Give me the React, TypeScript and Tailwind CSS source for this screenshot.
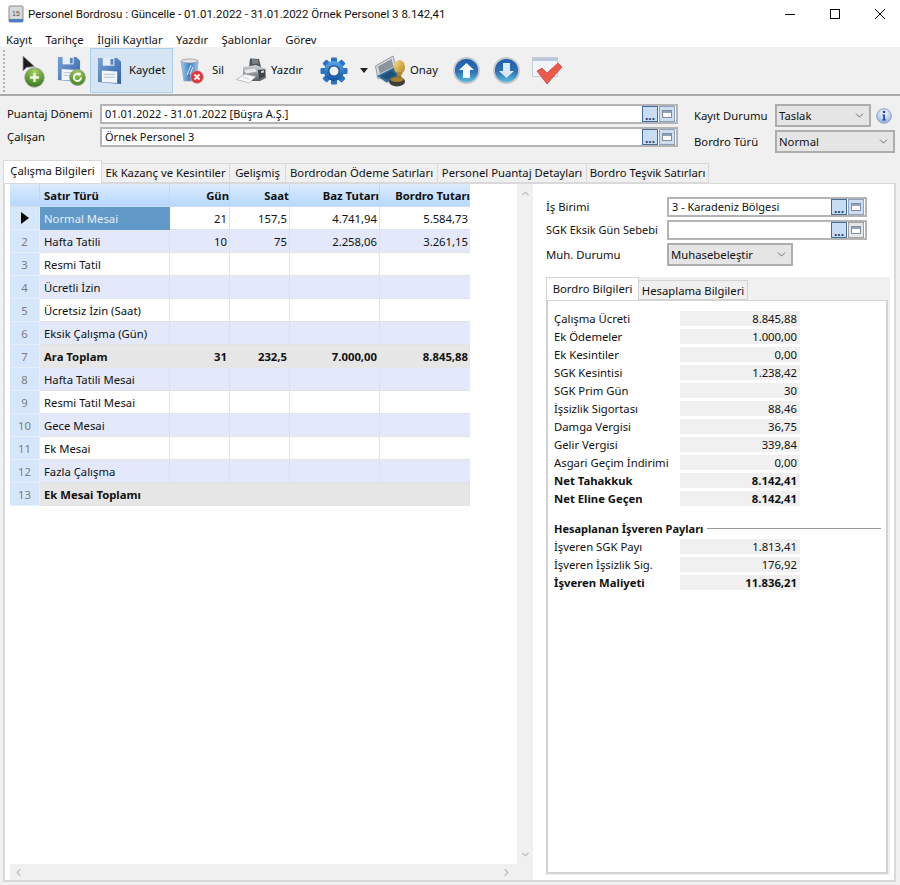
import type { ReactNode } from "react";
import { ChevronDown, ChevronLeft, ChevronRight, ChevronUp } from "lucide-react";

function Floppy({ w = 26, id }: { w?: number; id: string }) {
  return (
    <svg width={w} height={w * 1.12} viewBox="0 0 26 29">
      <defs>
        <linearGradient id={id} x1="0" x2="1" y1="0" y2="1">
          <stop offset="0" stopColor="#7aa3d6" />
          <stop offset="1" stopColor="#2f5fa5" />
        </linearGradient>
      </defs>
      <path d="M1 1h20l4 4v23L1 26z" fill={`url(#${id})`} />
      <path d="M6 1h12v8H6z" fill="#e8eef7" />
      <path d="M14 2h3v6h-3z" fill="#5c86bf" />
      <path d="M5 14l16 1v12L5 26z" fill="#f2f5f9" />
      <path d="M7 18h12M7 21h12" stroke="#b3c2d6" strokeWidth="1" />
    </svg>
  );
}

function GreenBadge({ children }: { children: ReactNode }) {
  return (
    <svg width="17" height="17" viewBox="0 0 17 17" className="absolute right-0 bottom-0">
      <defs>
        <radialGradient id="gb" cx="0.5" cy="0.25" r="0.85">
          <stop offset="0" stopColor="#a9d05c" />
          <stop offset="1" stopColor="#2f7a18" />
        </radialGradient>
      </defs>
      <circle cx="8.5" cy="8.5" r="8" fill="url(#gb)" stroke="#a5a5a5" strokeWidth="0.8" />
      {children}
    </svg>
  );
}

function ArrowAdd() {
  return (
    <div className="relative w-[24px] h-[32px] shrink-0">
      <svg width="14" height="18" viewBox="0 0 14 18" className="absolute left-0 top-0">
        <path d="M1 1v15l3.5-3.5 8-1z" fill="#1c1c1c" stroke="#a0a0a0" strokeWidth="0.8" />
      </svg>
      <div className="absolute left-[2px] bottom-[-1px] w-[21px] h-[21px]">
        <svg width="21" height="21" viewBox="0 0 21 21">
          <defs>
            <radialGradient id="add" cx="0.5" cy="0.2" r="0.9">
              <stop offset="0" stopColor="#acd165" />
              <stop offset="0.7" stopColor="#4a8c25" />
              <stop offset="1" stopColor="#2a6a16" />
            </radialGradient>
          </defs>
          <circle cx="10.5" cy="10.5" r="9.7" fill="url(#add)" stroke="#9a9a9a" strokeWidth="1" />
          <path d="M10.5 6v9M6 10.5h9" stroke="#f4f8ec" strokeWidth="2.4" />
        </svg>
      </div>
    </div>
  );
}

function SaveRefresh() {
  return (
    <div className="relative w-[29px] h-[30px] shrink-0">
      <Floppy w={24} id="fl1" />
      <GreenBadge>
        <path d="M12 8.5a3.6 3.6 0 1 1-1.5-3" fill="none" stroke="#fff" strokeWidth="1.8" />
        <path d="M8.5 3.5l3.5 0.5-1 3.5z" fill="#fff" />
      </GreenBadge>
    </div>
  );
}

function TrashIcon() {
  return (
    <svg width="24" height="26" viewBox="0 0 24 26" className="shrink-0">
      <defs>
        <linearGradient id="tr" x1="0" x2="1" y1="0" y2="0">
          <stop offset="0" stopColor="#a7cdee" />
          <stop offset="0.5" stopColor="#3c7fc8" />
          <stop offset="1" stopColor="#9dc2e4" />
        </linearGradient>
      </defs>
      <path d="M1 3h17l-2 20H4z" fill="url(#tr)" stroke="#8aa0b5" strokeWidth="0.7" />
      <ellipse cx="9.5" cy="3" rx="8.5" ry="2" fill="#dfe5ea" stroke="#8b8b8b" strokeWidth="0.7" />
      <path d="M7 17l4-10M10 16l3-7" stroke="#e3eff9" strokeWidth="1" />
      <circle cx="17" cy="19" r="6.5" fill="#e2383b" stroke="#bbb" strokeWidth="0.7" />
      <path d="M14.5 16.5l5 5M19.5 16.5l-5 5" stroke="#fff" strokeWidth="1.8" />
    </svg>
  );
}

function PrinterIcon() {
  return (
    <svg width="31" height="27" viewBox="0 0 31 27" className="shrink-0">
      <defs>
        <linearGradient id="pr" x1="0" x2="0" y1="0" y2="1">
          <stop offset="0" stopColor="#d4d6d8" />
          <stop offset="0.6" stopColor="#8c9094" />
          <stop offset="1" stopColor="#54585c" />
        </linearGradient>
      </defs>
      <path d="M14 1.5l9 0.5 2 8-12 1z" fill="#4e5357" />
      <path d="M16 2l6 0.5 1 4-7 0.5z" fill="#7b8085" />
      <path d="M7 10l13-2 10 4v9l-6 3H10l-3-3z" fill="url(#pr)" />
      <path d="M22 13l7-0.5v7l-6 2.5z" fill="#3e4347" />
      <path d="M25 14l3-0.5v2l-3 0.5z" fill="#d6d9db" />
      <path d="M8 13l11-1.500 2 3-11 2z" fill="#e6e8ea" />
      <path d="M0.500 22.500L9 17l11 2.500-7 6.500z" fill="#f8f8f8" stroke="#a5a8aa" strokeWidth="0.7" />
      <path d="M7 20.500l6 1.500" stroke="#cfd2d4" strokeWidth="1" />
    </svg>
  );
}

function GearIcon() {
  const teeth = [0, 45, 90, 135, 180, 225, 270, 315];
  return (
    <svg width="28" height="28" viewBox="0 0 28 28" className="shrink-0">
      <defs>
        <linearGradient id="ge" x1="0" x2="0" y1="0" y2="1">
          <stop offset="0" stopColor="#5aa7ea" />
          <stop offset="1" stopColor="#124f9f" />
        </linearGradient>
      </defs>
      {teeth.map((a) => (
        <rect key={a} x="11" y="0.5" width="6" height="7" rx="1" fill="#2a73c4" transform={`rotate(${a} 14 14)`} />
      ))}
      <circle cx="14" cy="14" r="10" fill="url(#ge)" />
      <circle cx="14" cy="14" r="5.2" fill="#f0f0f0" stroke="#0f4a94" strokeWidth="1.2" />
    </svg>
  );
}

function StampIcon() {
  return (
    <svg width="31" height="32" viewBox="0 0 31 32" className="shrink-0">
      <defs>
        <linearGradient id="st" x1="0" x2="1" y1="0" y2="1">
          <stop offset="0" stopColor="#f6dc85" />
          <stop offset="1" stopColor="#b58417" />
        </linearGradient>
      </defs>
      <path d="M0.500 11L18 1l3.500 12L3 24z" fill="#d9dcdf" stroke="#80858a" strokeWidth="0.8" />
      <path d="M3 11.500L16.500 4l2.500 8.500L5 20z" fill="#8d949b" />
      <path d="M1 21l20-10 7 7-16 10z" fill="#2f6a9a" stroke="#c9cccf" strokeWidth="1" />
      <path d="M6 21l11-5.500 4 4-9 5z" fill="#1e4f78" />
      <ellipse cx="24.500" cy="12" rx="5.500" ry="7" fill="url(#st)" />
      <path d="M22 17h5l-1 6h-3z" fill="#b88a1f" />
      <ellipse cx="22" cy="26.500" rx="8" ry="5" fill="#3e3e3e" />
      <ellipse cx="22" cy="24.500" rx="6.500" ry="2.500" fill="#a6812c" />
    </svg>
  );
}

function RoundArrow({ down }: { down?: boolean }) {
  return (
    <svg width="27" height="27" viewBox="0 0 27 27" className="shrink-0">
      <defs>
        <linearGradient id="ra" x1="0" x2="0" y1="0" y2="1">
          <stop offset="0" stopColor="#1f5da8" />
          <stop offset="0.55" stopColor="#2d72b8" />
          <stop offset="1" stopColor="#5ec3e0" />
        </linearGradient>
      </defs>
      <circle cx="13.5" cy="13.5" r="12.500" fill="url(#ra)" stroke="#c2c6ca" strokeWidth="1.8" />
      {down ? (
        <path d="M10 6h7v8h4l-7.500 7L6 14h4z" fill="#dbe9f4" />
      ) : (
        <path d="M10 21h7v-8h4l-7.500-7L6 13h4z" fill="#f6fafd" />
      )}
    </svg>
  );
}

function CheckWindow() {
  return (
    <svg width="31" height="28" viewBox="0 0 31 28" className="shrink-0">
      <rect x="0.500" y="0.500" width="25" height="19" fill="#f2f5fa" stroke="#c3ccd7" />
      <rect x="1" y="1" width="24" height="3" fill="#b9c8da" />
      <path d="M5 14l5-3 5 5L26 6l4 4-15 17z" fill="#ec5a4e" stroke="#c9392f" strokeWidth="0.7" />
    </svg>
  );
}

function Sep({ w }: { w: number }) {
  return <div style={{ width: w }} className="shrink-0" />;
}

function LookupButtons({ gray }: { gray?: boolean }) {
  return (
    <div className="flex gap-[1px] mr-[1px] shrink-0">
      <div className="w-[16px] h-[16px] bg-[#c9dcf5] border border-[#466c9c] flex items-end justify-center text-[12px] leading-[11px] font-bold text-[#1c3d70]">
        ...
      </div>
      <div className={`w-[16px] h-[16px] ${gray ? "bg-[#e6e6e6] border-[#a0a0a0]" : "bg-[#cfddf0] border-[#8ea2ba]"} border flex items-center justify-center`}>
        <div className="w-[10px] h-[8px] border border-[#7d8ea3] bg-white">
          <div className="h-[2px] bg-[#8ea2ba]" />
        </div>
      </div>
    </div>
  );
}

function Lookup({ value, w }: { value: string; w: string }) {
  return (
    <div className={`${w} h-[20px] border-2 border-[#b4b4b4] bg-white flex items-center justify-between pl-[3px]`}>
      <span className="whitespace-nowrap pb-[2px] text-[11px]">{value}</span>
      <LookupButtons gray={value === ""} />
    </div>
  );
}

function Select({ value, w }: { value: string; w: string }) {
  return (
    <div className={`${w} h-[23px] bg-[#e5e5e5] border-2 border-[#adadad] flex items-center justify-between pl-[2px] pr-[3px]`}>
      <span className="pb-[1px]">{value}</span>
      <ChevronDown size={13} strokeWidth={1.2} className="text-[#333]" />
    </div>
  );
}

const tabs = [
  { label: "Ek Kazanç ve Kesintiler", w: "w-[128px]" },
  { label: "Gelişmiş", w: "w-[56px]" },
  { label: "Bordrodan Ödeme Satırları", w: "w-[152px]" },
  { label: "Personel Puantaj Detayları", w: "w-[149px]" },
  { label: "Bordro Teşvik Satırları", w: "w-[122px]" },
];

const rows: [string, string, string, string, string][] = [
  ["Normal Mesai", "21", "157,5", "4.741,94", "5.584,73"],
  ["Hafta Tatili", "10", "75", "2.258,06", "3.261,15"],
  ["Resmi Tatil", "", "", "", ""],
  ["Ücretli İzin", "", "", "", ""],
  ["Ücretsiz İzin (Saat)", "", "", "", ""],
  ["Eksik Çalışma (Gün)", "", "", "", ""],
  ["Ara Toplam", "31", "232,5", "7.000,00", "8.845,88"],
  ["Hafta Tatili Mesai", "", "", "", ""],
  ["Resmi Tatil Mesai", "", "", "", ""],
  ["Gece Mesai", "", "", "", ""],
  ["Ek Mesai", "", "", "", ""],
  ["Fazla Çalışma", "", "", "", ""],
  ["Ek Mesai Toplamı", "", "", "", ""],
];

const cols = "grid grid-cols-[30px_130px_60px_60px_90px_90px]";

function Grid() {
  return (
    <div className="w-[460px]">
      <div className={`${cols} h-[23px] bg-gradient-to-b from-[#dcebfc] to-[#b7d8fd] font-bold border-b border-[#cfdcec]`}>
        <div className="border-r border-[#c7d6e8]" />
        <div className="border-r border-[#c7d6e8] pl-[4px] flex items-center">Satır Türü</div>
        <div className="border-r border-[#c7d6e8] flex items-center justify-end">Gün</div>
        <div className="border-r border-[#c7d6e8] flex items-center justify-end">Saat</div>
        <div className="border-r border-[#c7d6e8] flex items-center justify-end">Baz Tutarı</div>
        <div className="flex items-center justify-end whitespace-nowrap">Bordro Tutarı</div>
      </div>
      {rows.map((r, i) => {
        const total = i === 6 || i === 12;
        const bg = total ? "bg-[#e6e6e6]" : i % 2 === 1 ? "bg-[#e3e9fb]" : "bg-white";
        const line = total ? "border-[#e6e6e6]" : "border-[#e2e2e2]";
        return (
          <div key={r[0]} className={`${cols} h-[23px] ${bg} ${total ? "font-bold" : ""}`}>
            <div className="bg-[#d6e7fb] border-r border-b border-[#e6eef8] flex items-center justify-center text-[#7d7d7d] font-normal">
              {i === 0 ? (
                <svg width="8" height="12" viewBox="0 0 8 12">
                  <path d="M0 0l8 6-8 6z" fill="#000" />
                </svg>
              ) : (
                i + 1
              )}
            </div>
            <div
              className={`border-r border-b pl-[4px] flex items-center whitespace-nowrap ${
                i === 0 ? "bg-[#6199c9] text-[#e4eff8] border-[#6199c9]" : line
              }`}
            >
              {r[0]}
            </div>
            {r.slice(1).map((v, k) => (
              <div
                key={k}
                className={`${k < 3 ? "border-r" : ""} border-b ${line} flex items-center justify-end pr-[2px] ${
                  k === 3 ? "pr-[1px]" : ""
                }`}
              >
                {v}
              </div>
            ))}
          </div>
        );
      })}
    </div>
  );
}

function Money({ label, value, bold }: { label: string; value: string; bold?: boolean }) {
  return (
    <div className={`flex items-center h-[15px] mb-[3px] ${bold ? "font-bold" : ""}`}>
      <div className="w-[126px] whitespace-nowrap">{label}</div>
      <div className="w-[120px] h-[15px] bg-[#f0f0f0] flex items-center justify-end pr-[3px]">{value}</div>
    </div>
  );
}

export default function App() {
  return (
    <div className="w-[900px] h-[885px] overflow-hidden bg-[#f0f0f0] text-[#111] text-[11.3px] leading-[15px] font-['Noto_Sans',sans-serif] flex flex-col">
      <div className="h-[31px] bg-white flex items-center shrink-0 pb-[3px]">
        <div className="w-[28px] flex justify-center pl-[4px]">
          <svg width="16" height="18" viewBox="0 0 16 18">
            <rect x="1" y="1" width="14" height="16" rx="1" fill="#d8d8d8" stroke="#8c8c8c" />
            <rect x="1" y="14" width="14" height="3" fill="#4d7dc4" />
            <text x="8" y="11" fontSize="7" textAnchor="middle" fill="#555" fontFamily="Liberation Sans">15</text>
          </svg>
        </div>
        <span className="text-[11.5px] flex-1 whitespace-nowrap font-['Roboto',sans-serif]">
          Personel Bordrosu : Güncelle - 01.01.2022 - 31.01.2022 Örnek Personel 3 8.142,41
        </span>
        <div className="flex items-center gap-[35px] pr-[15px]">
          <svg width="10" height="10" viewBox="0 0 10 10">
            <path d="M0 5.500h10" stroke="#000" strokeWidth="1" />
          </svg>
          <svg width="10" height="10" viewBox="0 0 10 10">
            <rect x="0.500" y="0.500" width="9" height="9" fill="none" stroke="#000" strokeWidth="1" />
          </svg>
          <svg width="10" height="10" viewBox="0 0 10 10">
            <path d="M0 0l10 10M10 0L0 10" stroke="#000" strokeWidth="1" />
          </svg>
        </div>
      </div>

      <div className="h-[16px] bg-white flex items-center pl-[6px] gap-[13.5px] shrink-0">
        {["Kayıt", "Tarihçe", "İlgili Kayıtlar", "Yazdır", "Şablonlar", "Görev"].map((m) => (
          <span key={m}>{m}</span>
        ))}
      </div>

      <div className="h-[49px] border-b-2 border-[#a9a9a9] flex items-center shrink-0 pl-[3px]">
        <div className="w-[2px] h-[42px] border-l-2 border-dotted border-[#b5b5b5] shrink-0" />
        <Sep w={17} />
        <ArrowAdd />
        <Sep w={11} />
        <SaveRefresh />
        <Sep w={4} />
        <div className="w-[83px] h-[45px] bg-[#d5e5f3] border border-[#a9cfea] flex items-center pl-[6px] shrink-0">
          <Floppy w={25} id="fl2" />
          <span className="ml-[7px] pb-[2px]">Kaydet</span>
        </div>
        <Sep w={7} />
        <TrashIcon />
        <span className="ml-[8px] w-[12px] pb-[2px]">Sil</span>
        <Sep w={12} />
        <PrinterIcon />
        <span className="ml-[4px] w-[31px] pb-[2px]">Yazdır</span>
        <Sep w={18} />
        <GearIcon />
        <Sep w={12} />
        <svg width="8" height="5" viewBox="0 0 8 5" className="shrink-0">
          <path d="M0 0h8L4 5z" fill="#222" />
        </svg>
        <Sep w={7} />
        <StampIcon />
        <span className="ml-[4px] w-[28px] pb-[2px]">Onay</span>
        <Sep w={15} />
        <RoundArrow />
        <Sep w={13} />
        <RoundArrow down />
        <Sep w={12} />
        <CheckWindow />
      </div>

      <div className="h-[64px] flex shrink-0 pl-[7px] pt-[8px]">
        <div className="w-[93px] flex flex-col gap-[8px] pt-[2px]">
          <span className="h-[15px] whitespace-nowrap">Puantaj Dönemi</span>
          <span className="h-[15px]">Çalışan</span>
        </div>
        <div className="flex flex-col gap-[3px]">
          <Lookup w="w-[578px]" value="01.01.2022 - 31.01.2022 [Büşra A.Ş.]" />
          <Lookup w="w-[578px]" value="Örnek Personel 3" />
        </div>
        <div className="w-[81px] ml-[16px] flex flex-col gap-[11px] pt-[4px]">
          <span className="h-[15px] whitespace-nowrap">Kayıt Durumu</span>
          <span className="h-[15px]">Bordro Türü</span>
        </div>
        <div className="flex flex-col gap-[3px]">
          <div className="flex items-center gap-[5px]">
            <Select w="w-[96px]" value="Taslak" />
            <svg width="16" height="16" viewBox="0 0 16 16">
              <defs>
                <radialGradient id="inf" cx="0.5" cy="0.3" r="0.8">
                  <stop offset="0" stopColor="#ffffff" />
                  <stop offset="1" stopColor="#7fa8dc" />
                </radialGradient>
              </defs>
              <circle cx="8" cy="8" r="7.3" fill="url(#inf)" stroke="#8fa3bd" />
              <circle cx="8" cy="4" r="1.3" fill="#1c3fb0" />
              <path d="M6.3 6.5h2.6v5h1.2v1H6v-1h1.2v-4H6.3z" fill="#1c3fb0" />
            </svg>
          </div>
          <Select w="w-[120px]" value="Normal" />
        </div>
      </div>

      <div className="h-[23px] flex items-end pl-[3px] shrink-0 relative z-10">
        <div className="w-[99px] h-[23px] bg-white border border-b-0 border-[#d9d9d9] flex items-center justify-center pb-[3px]">
          Çalışma Bilgileri
        </div>
        {tabs.map((t) => (
          <div
            key={t.label}
            className={`${t.w} h-[20px] border border-l-0 border-[#d9d9d9] flex items-center justify-center whitespace-nowrap pb-[1px]`}
          >
            {t.label}
          </div>
        ))}
      </div>

      <div className="ml-[3px] w-[893px] h-[699px] border-2 border-t border-[#d9d9d9] bg-white flex shrink-0">
        <div className="w-[528px] h-full flex flex-col shrink-0 pl-[5px]">
          <div className="flex flex-1 min-h-0">
            <div className="flex-1">
              <Grid />
            </div>
            <div className="w-[16px] bg-[#f0f0f0] flex flex-col justify-between items-center pt-[4px] pb-[4px]">
              <ChevronUp size={11} strokeWidth={3} className="text-[#bdbdbd]" />
              <ChevronDown size={11} strokeWidth={3} className="text-[#bdbdbd]" />
            </div>
          </div>
          <div className="h-[16px] bg-[#f0f0f0] flex items-center justify-between pl-[3px] pr-[21px]">
            <ChevronLeft size={11} strokeWidth={3} className="text-[#bdbdbd]" />
            <ChevronRight size={11} strokeWidth={3} className="text-[#bdbdbd]" />
          </div>
        </div>

        <div className="flex-1 pl-[13px] pt-[13px]">
          <div className="flex">
            <div className="w-[121px] flex flex-col gap-[8px] pt-[2px]">
              <span className="h-[15px]">İş Birimi</span>
              <span className="h-[15px] whitespace-nowrap text-[11px]">SGK Eksik Gün Sebebi</span>
              <span className="h-[15px] mt-[2px]">Muh. Durumu</span>
            </div>
            <div className="flex flex-col gap-[3px]">
              <Lookup w="w-[200px]" value="3 - Karadeniz Bölgesi" />
              <Lookup w="w-[200px]" value="" />
              <Select w="w-[126px]" value="Muhasebeleştir" />
            </div>
          </div>

          <div className="mt-[11px] w-[344px] h-[598px] bg-[#f0f0f0]">
            <div className="flex items-end h-[23px]">
              <div className="w-[93px] h-[23px] bg-white border border-b-0 border-[#d3d3d3] flex items-center justify-center relative z-10 pb-[2px]">
                Bordro Bilgileri
              </div>
              <div className="w-[109px] h-[20px] border border-l-0 border-[#d3d3d3] flex items-center justify-center">
                Hesaplama Bilgileri
              </div>
            </div>
            <div className="w-[342px] h-[574px] bg-white border-2 border-t border-[#d3d3d3] pl-[6px] pt-[10px]">
              <Money label="Çalışma Ücreti" value="8.845,88" />
              <Money label="Ek Ödemeler" value="1.000,00" />
              <Money label="Ek Kesintiler" value="0,00" />
              <Money label="SGK Kesintisi" value="1.238,42" />
              <Money label="SGK Prim Gün" value="30" />
              <Money label="İşsizlik Sigortası" value="88,46" />
              <Money label="Damga Vergisi" value="36,75" />
              <Money label="Gelir Vergisi" value="339,84" />
              <Money label="Asgari Geçim İndirimi" value="0,00" />
              <Money label="Net Tahakkuk" value="8.142,41" bold />
              <Money label="Net Eline Geçen" value="8.142,41" bold />
              <div className="flex items-center h-[15px] mt-[15px] mb-[3px] font-bold pr-[5px]">
                <span className="whitespace-nowrap text-[11px]">Hesaplanan İşveren Payları</span>
                <div className="flex-1 h-px bg-[#9a9a9a] ml-[4px]" />
              </div>
              <Money label="İşveren SGK Payı" value="1.813,41" />
              <Money label="İşveren İşsizlik Sig." value="176,92" />
              <Money label="İşveren Maliyeti" value="11.836,21" bold />
            </div>
          </div>
        </div>
      </div>
    </div>
  );
}
